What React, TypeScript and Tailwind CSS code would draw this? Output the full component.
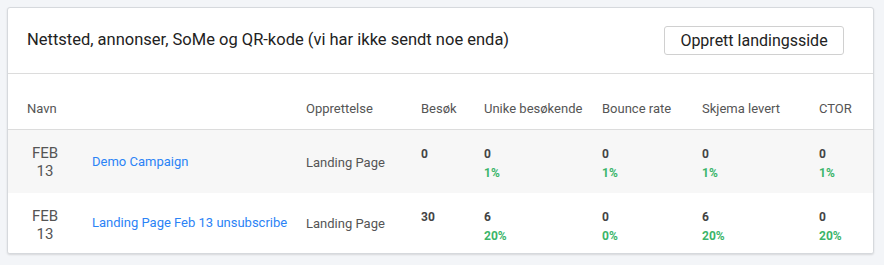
const COLS = "grid grid-cols-[74px_224px_115px_63px_118px_100px_117px_1fr]";

const ROWS = [
  {
    name: "Demo Campaign",
    type: "Landing Page",
    visits: "0",
    stats: [
      ["0", "1%"],
      ["0", "1%"],
      ["0", "1%"],
      ["0", "1%"],
    ],
    bg: "bg-[#f7f7f7]",
  },
  {
    name: "Landing Page Feb 13 unsubscribe",
    type: "Landing Page",
    visits: "30",
    stats: [
      ["6", "20%"],
      ["0", "0%"],
      ["6", "20%"],
      ["0", "20%"],
    ],
    bg: "bg-white",
  },
];

const HEADS = ["Opprettelse", "Besøk", "Unike besøkende", "Bounce rate", "Skjema levert", "CTOR"];

export default function App() {
  return (
    <div className="min-h-[265px] w-[884px] bg-[#f3f5f8] pt-[7px] pl-[7px] font-['Roboto',sans-serif]">
      <div className="w-[867px] overflow-hidden rounded-[3px] border border-[#d6d9dd] bg-white shadow-[0_1px_2px_rgba(0,0,0,0.12)]">
        <div className="flex h-[66px] items-center justify-between border-b border-[#dcdcdc] pl-[19px] pr-[29px]">
          <h2 className="text-[16.5px] text-[#222]">
            Nettsted, annonser, SoMe og QR-kode (vi har ikke sendt noe enda)
          </h2>
          <button className="h-[29px] w-[180px] rounded-[3px] border border-[#d0d0d0] bg-white text-[16px] text-[#222]">
            Opprett landingsside
          </button>
        </div>

        <div className={`${COLS} border-b border-[#dcdcdc] pt-[27px] pb-[12px] text-[13px] leading-[16px] text-[#555]`}>
          <div className="col-span-2 pl-[19px]">Navn</div>
          {HEADS.map((h) => (
            <div key={h}>{h}</div>
          ))}
        </div>

        {ROWS.map((r, i) => (
          <div key={r.name} className={`${COLS} ${r.bg} ${i === 0 ? "h-[63px]" : "h-[60px]"}`}>
            <div className="pt-[14px] text-center text-[15px] leading-[18px] text-[#555]">
              FEB
              <br />
              13
            </div>
            <div className="self-center pl-[10px] text-[13px] text-[#2b83f6]">{r.name}</div>
            <div className="self-center pt-[2px] text-[13px] text-[#555]">{r.type}</div>
            <div className="pt-[15px] text-[12px] leading-[19px] font-bold text-[#444]">{r.visits}</div>
            {r.stats.map(([v, p], j) => (
              <div key={j} className="pt-[15px] text-[12px] leading-[19px] font-bold">
                <div className="text-[#444]">{v}</div>
                <div className="text-[#3bb56a]">{p}</div>
              </div>
            ))}
          </div>
        ))}
      </div>
    </div>
  );
}
